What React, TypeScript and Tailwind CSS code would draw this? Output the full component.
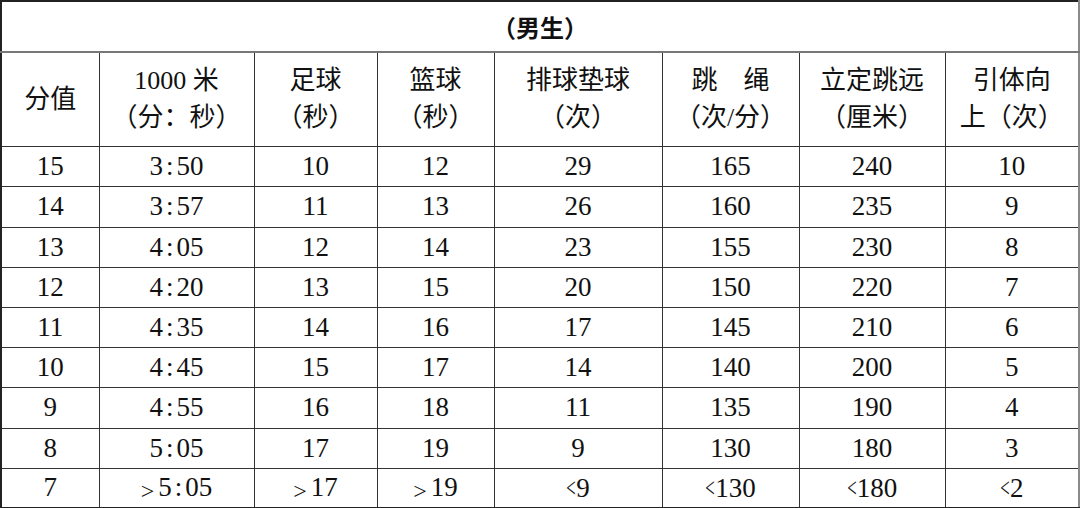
import React from "react";

const cols = [98, 155, 123, 117, 168, 137, 146, 134];

const heads: string[][] = [
  ["分值"],
  ["1000 米", "（分：秒）"],
  ["足球", "（秒）"],
  ["篮球", "（秒）"],
  ["排球垫球", "（次）"],
  ["跳　绳", "（次/分）"],
  ["立定跳远", "（厘米）"],
  ["引体向", "上（次）"],
];

const rows: string[][] = [
  ["15", "3:50", "10", "12", "29", "165", "240", "10"],
  ["14", "3:57", "11", "13", "26", "160", "235", "9"],
  ["13", "4:05", "12", "14", "23", "155", "230", "8"],
  ["12", "4:20", "13", "15", "20", "150", "220", "7"],
  ["11", "4:35", "14", "16", "17", "145", "210", "6"],
  ["10", "4:45", "15", "17", "14", "140", "200", "5"],
  ["9", "4:55", "16", "18", "11", "135", "190", "4"],
  ["8", "5:05", "17", "19", "9", "130", "180", "3"],
  ["7", ">5:05", ">17", ">19", "<9", "<130", "<180", "<2"],
];

const rowHeights = [40, 41, 40, 40, 40, 40, 41, 40, 40];

// renders a score value, spacing the colon and drawing the > / < marks
const Value = ({ v }: { v: string }) => {
  let gt = false;
  let lt = false;
  let s = v;
  if (s.startsWith(">")) {
    gt = true;
    s = s.slice(1);
  } else if (s.startsWith("<")) {
    lt = true;
    s = s.slice(1);
  }
  const parts = s.split(":");
  return (
    <span className="whitespace-nowrap">
      {gt && <span className="inline-block text-[24px] translate-y-[3px] mr-[4px]">&gt;</span>}
      {lt && <span className="inline-block text-[28px] scale-x-[0.6] -mx-[3px]">&lt;</span>}
      {parts.length === 2 ? (
        <>
          {parts[0]}
          <span className="px-[3px]">:</span>
          {parts[1]}
        </>
      ) : (
        s
      )}
    </span>
  );
};

export default function App() {
  return (
    <div className="w-[1080px] h-[508px] bg-white overflow-hidden">
      <table
        className="table-fixed border-collapse w-[1080px] text-[#111] text-center"
        style={{ fontFamily: '"Liberation Serif", "Noto Sans CJK SC", serif' }}
      >
        <colgroup>
          {cols.map((w, i) => (
            <col key={i} style={{ width: w }} />
          ))}
        </colgroup>
        <tbody>
          <tr className="h-[51px]">
            <td
              colSpan={8}
              className="border-t-2 border-l-2 border-r-2 border-b-2 border-t-[#222] border-l-[#222] border-r-[#8a8a8a] border-b-[#777] p-0 text-[24px] font-bold"
              style={{ fontFamily: '"Noto Sans CJK SC", sans-serif' }}
            >
              （男生）
            </td>
          </tr>
          <tr className="h-[94px]">
            {heads.map((h, i) => (
              <td
                key={i}
                className={`border border-[#333] p-0 text-[26px] leading-[37px] ${i === 0 ? "border-l-2 border-l-[#222]" : ""} ${i === 7 ? "border-r-2 border-r-[#8a8a8a]" : ""}`}
              >
                {h.map((line, j) => (
                  <div key={j} className="whitespace-nowrap">
                    {line}
                  </div>
                ))}
              </td>
            ))}
          </tr>
          {rows.map((r, ri) => (
            <tr key={ri} style={{ height: rowHeights[ri] }}>
              {r.map((v, ci) => (
                <td
                  key={ci}
                  className={`border border-[#333] p-0 text-[27px] leading-none ${ci === 0 ? "border-l-2 border-l-[#222]" : ""} ${ci === 7 ? "border-r-2 border-r-[#8a8a8a]" : ""} ${ri === 8 ? "border-b-2 border-b-[#222]" : ""}`}
                >
                  <Value v={v} />
                </td>
              ))}
            </tr>
          ))}
        </tbody>
      </table>
    </div>
  );
}
